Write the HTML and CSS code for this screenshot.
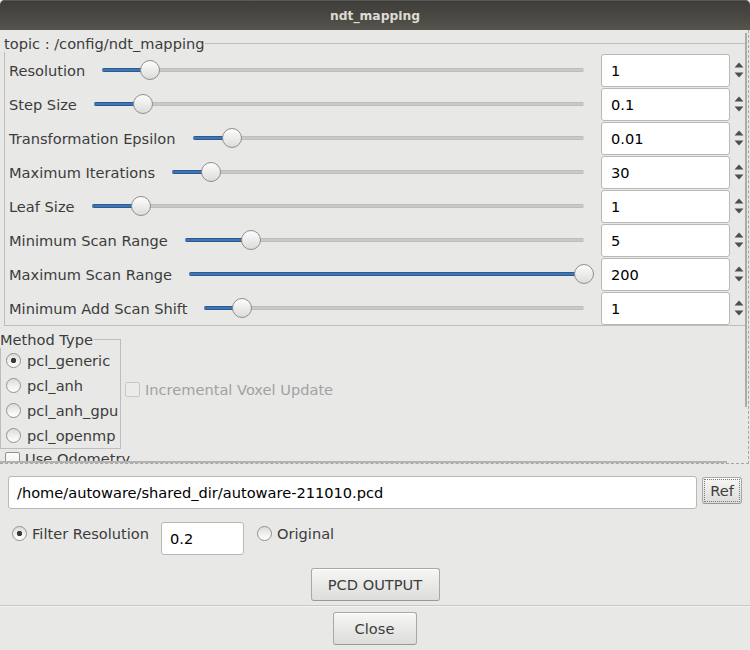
FILE: index.html
```html
<!DOCTYPE html>
<html>
<head>
<meta charset="utf-8">
<title>ndt_mapping</title>
<link rel="stylesheet" href="styles.css">
</head>
<body>
<div class="window">
  <header class="titlebar"><span>ndt_mapping</span></header>

  <div class="scroll">
    <section class="group topic">
      <div class="group-title">topic : /config/ndt_mapping</div>
      <div class="rows">
        <div class="row">
          <span class="label">Resolution</span>
          <div class="slider" style="--p:10%"><div class="groove"><div class="fill"></div><div class="handle"></div></div></div>
          <div class="spin">1</div>
          <svg class="arrows" viewBox="0 0 16 34"><polygon points="4.5,14.5 13.5,14.5 9,9.5"/><polygon points="4.5,19.5 13.5,19.5 9,24.5"/></svg>
        </div>
        <div class="row">
          <span class="label">Step Size</span>
          <div class="slider" style="--p:10%"><div class="groove"><div class="fill"></div><div class="handle"></div></div></div>
          <div class="spin">0.1</div>
          <svg class="arrows" viewBox="0 0 16 34"><polygon points="4.5,14.5 13.5,14.5 9,9.5"/><polygon points="4.5,19.5 13.5,19.5 9,24.5"/></svg>
        </div>
        <div class="row">
          <span class="label">Transformation Epsilon</span>
          <div class="slider" style="--p:10%"><div class="groove"><div class="fill"></div><div class="handle"></div></div></div>
          <div class="spin">0.01</div>
          <svg class="arrows" viewBox="0 0 16 34"><polygon points="4.5,14.5 13.5,14.5 9,9.5"/><polygon points="4.5,19.5 13.5,19.5 9,24.5"/></svg>
        </div>
        <div class="row">
          <span class="label">Maximum Iterations</span>
          <div class="slider" style="--p:9.5%"><div class="groove"><div class="fill"></div><div class="handle"></div></div></div>
          <div class="spin">30</div>
          <svg class="arrows" viewBox="0 0 16 34"><polygon points="4.5,14.5 13.5,14.5 9,9.5"/><polygon points="4.5,19.5 13.5,19.5 9,24.5"/></svg>
        </div>
        <div class="row">
          <span class="label">Leaf Size</span>
          <div class="slider" style="--p:10%"><div class="groove"><div class="fill"></div><div class="handle"></div></div></div>
          <div class="spin">1</div>
          <svg class="arrows" viewBox="0 0 16 34"><polygon points="4.5,14.5 13.5,14.5 9,9.5"/><polygon points="4.5,19.5 13.5,19.5 9,24.5"/></svg>
        </div>
        <div class="row">
          <span class="label">Minimum Scan Range</span>
          <div class="slider" style="--p:16.6%"><div class="groove"><div class="fill"></div><div class="handle"></div></div></div>
          <div class="spin">5</div>
          <svg class="arrows" viewBox="0 0 16 34"><polygon points="4.5,14.5 13.5,14.5 9,9.5"/><polygon points="4.5,19.5 13.5,19.5 9,24.5"/></svg>
        </div>
        <div class="row">
          <span class="label">Maximum Scan Range</span>
          <div class="slider" style="--p:100%"><div class="groove"><div class="fill"></div><div class="handle"></div></div></div>
          <div class="spin">200</div>
          <svg class="arrows" viewBox="0 0 16 34"><polygon points="4.5,14.5 13.5,14.5 9,9.5"/><polygon points="4.5,19.5 13.5,19.5 9,24.5"/></svg>
        </div>
        <div class="row">
          <span class="label">Minimum Add Scan Shift</span>
          <div class="slider" style="--p:9.8%"><div class="groove"><div class="fill"></div><div class="handle"></div></div></div>
          <div class="spin">1</div>
          <svg class="arrows" viewBox="0 0 16 34"><polygon points="4.5,14.5 13.5,14.5 9,9.5"/><polygon points="4.5,19.5 13.5,19.5 9,24.5"/></svg>
        </div>
      </div>
    </section>

    <div class="method-row">
      <section class="group method">
        <div class="group-title">Method Type</div>
        <div class="radios">
          <div class="radio-item"><span class="radio checked"></span>pcl_generic</div>
          <div class="radio-item"><span class="radio"></span>pcl_anh</div>
          <div class="radio-item"><span class="radio"></span>pcl_anh_gpu</div>
          <div class="radio-item"><span class="radio"></span>pcl_openmp</div>
        </div>
      </section>
      <div class="check disabled"><span class="box"></span>Incremental Voxel Update</div>
    </div>

    <div class="check odometry"><span class="box"></span>Use Odometry</div>

    <div class="vbar"></div>
    <div class="hbar"></div>
  </div>

  <div class="bottom">
    <div class="path-row">
      <div class="field path">/home/autoware/shared_dir/autoware-211010.pcd</div>
      <button class="btn ref">Ref</button>
    </div>
    <div class="filter-row">
      <div class="radio-label"><span class="radio checked"></span>Filter Resolution</div>
      <div class="field small">0.2</div>
      <div class="radio-label original"><span class="radio"></span>Original</div>
    </div>
    <div class="center-row pcd-row">
      <button class="btn pcd">PCD OUTPUT</button>
    </div>
    <div class="separator"></div>
    <div class="center-row close-row">
      <button class="btn close">Close</button>
    </div>
  </div>
</div>
</body>
</html>
```

FILE: styles.css
```css
html, body {
  margin: 0;
  padding: 0;
  background: #e8e8e7;
}

body {
  font-family: "DejaVu Sans", "Liberation Sans", sans-serif;
  font-size: 14.6px;
  color: #3c3c3c;
  width: 750px;
  height: 650px;
  overflow: hidden;
}

.titlebar {
  height: 30px;
  box-sizing: border-box;
  padding-top: 1px;
  display: flex;
  align-items: center;
  justify-content: center;
  background: linear-gradient(#3e3d39, #4a4843 55%, #56544d);
  box-shadow: inset 0 1px 0 #5a5852;
  border-radius: 5px 5px 0 0;
  color: #dfdbd2;
  font-weight: bold;
  font-size: 12.3px;
}

/* scroll area */
.scroll {
  position: relative;
  width: 748px;
  height: 433px;
  overflow: hidden;
  border-right: 1px dashed #a6a6a4;
  border-bottom: 1px dashed #a6a6a4;
}

.vbar {
  position: absolute;
  left: 745px;
  top: 3px;
  width: 2px;
  height: 374px;
  background: #ababa9;
}

.hbar {
  position: absolute;
  left: 0;
  top: 431px;
  width: 727px;
  height: 2px;
  background: #b3b3b1;
}

/* group boxes */
.group {
  border: 1px solid #bdbdbb;
}

.group-title {
  width: max-content;
  line-height: 17px;
  margin: -9px 0 0 -1px;
  padding-right: 1px;
  background: #e8e8e7;
  white-space: nowrap;
}

.topic {
  margin: 13px 1px 0 4px;
}

.rows {
  padding-top: 1px;
}

.row {
  display: flex;
  align-items: center;
  height: 34px;
  padding-left: 4px;
}

.label {
  white-space: nowrap;
}

.slider {
  flex: 1;
  margin-left: 7px;
  padding: 0 10px;
}

.groove {
  position: relative;
  height: 4px;
  background: linear-gradient(#b7b7b5, #cfcfcd 50%, #b7b7b5);
  border-radius: 2px;
}

.fill {
  width: var(--p);
  height: 100%;
  border-radius: 2px;
  background: linear-gradient(#1e4c84, #4d82bf 50%, #1e4c84);
}

.handle {
  position: absolute;
  left: var(--p);
  top: 50%;
  width: 20px;
  height: 20px;
  margin: -10px 0 0 -10px;
  box-sizing: border-box;
  border-radius: 50%;
  border: 1px solid #8f8f8d;
  background: linear-gradient(#fdfdfd, #e9e9e8 60%, #dcdcdb);
}

.spin {
  flex: none;
  width: 129px;
  height: 33px;
  margin-left: 7px;
  box-sizing: border-box;
  padding-left: 9px;
  display: flex;
  align-items: center;
  background: #fff;
  border: 1px solid #b8b8b6;
  border-radius: 3px;
  color: #000;
}

.arrows {
  flex: none;
  width: 16px;
  height: 34px;
  fill: #4e4e4c;
}

/* method type */
.method-row {
  display: flex;
  align-items: center;
}

.method {
  margin-top: 13px;
  width: 121px;
  box-sizing: border-box;
}

.radio-item {
  display: flex;
  align-items: center;
  gap: 6px;
  height: 25px;
  padding-left: 5px;
  white-space: nowrap;
}

.radio {
  flex: none;
  width: 15px;
  height: 15px;
  box-sizing: border-box;
  border-radius: 50%;
  border: 1px solid #92928f;
  background: linear-gradient(#dcdcdb, #f7f7f6 70%, #fdfdfd);
}

.radio.checked {
  background:
    radial-gradient(circle, #3a3a3a 0 2.4px, transparent 3px),
    linear-gradient(#dcdcdb, #f7f7f6 70%, #fdfdfd);
}

.check {
  display: flex;
  align-items: center;
  gap: 5px;
  white-space: nowrap;
}

.box {
  flex: none;
  width: 15px;
  height: 15px;
  box-sizing: border-box;
  border: 1px solid #92928f;
  border-radius: 2px;
  background: linear-gradient(#fdfdfd, #ececeb);
}

.check.disabled {
  margin: 3px 0 0 4px;
  color: #a2a2a0;
}

.check.disabled .box {
  border-color: #c8c8c6;
  background: #ebebea;
}

.odometry {
  align-items: flex-start;
  line-height: 16px;
  height: 16px;
  margin: 2px 0 0 5px;
}

.odometry .box {
  margin-top: 1px;
}

/* bottom area */
.bottom {
  padding: 12px 8px 0;
}

.path-row {
  display: flex;
  align-items: flex-start;
  gap: 5px;
}

.field {
  height: 33px;
  box-sizing: border-box;
  padding-left: 8px;
  display: flex;
  align-items: center;
  background: #fff;
  border: 1px solid #b8b8b6;
  border-radius: 3px;
  color: #000;
  white-space: nowrap;
}

.field.path {
  flex: 1;
}

.btn {
  font: inherit;
  color: #3c3c3c;
  box-sizing: border-box;
  padding: 0;
  border: 1px solid #a9a8a6;
  border-bottom-color: #9a9997;
  border-radius: 3px;
  background: linear-gradient(#f7f7f6, #e9e9e8 50%, #dddddb);
  box-shadow: inset 0 1px 0 #ffffff;
}

.ref {
  width: 40px;
  height: 27px;
  margin-top: 1px;
  outline: 1px dotted #7a7a78;
  outline-offset: -3px;
}

.filter-row {
  display: flex;
  align-items: flex-start;
  margin-top: 13px;
  padding-left: 4px;
}

.radio-label {
  display: flex;
  align-items: center;
  gap: 5px;
  height: 22px;
  white-space: nowrap;
}

.field.small {
  width: 83px;
  margin-left: 12px;
}

.original {
  margin-left: 13px;
}

.center-row {
  display: flex;
  justify-content: center;
}

.pcd-row {
  margin-top: 13px;
}

.pcd {
  width: 129px;
  height: 33px;
}

.separator {
  height: 1px;
  margin: 4px -8px 0;
  background: #c9c9c7;
  border-bottom: 1px solid #f3f3f2;
}

.close-row {
  margin-top: 5px;
  padding-right: 1px;
}

.close {
  width: 84px;
  height: 33px;
}
```
